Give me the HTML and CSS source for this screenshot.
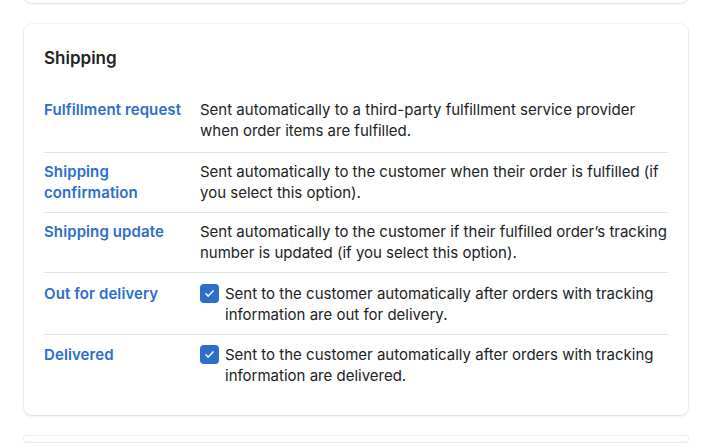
FILE: index.html
```html
<!DOCTYPE html>
<html lang="en">
<head>
<meta charset="utf-8">
<title>Shipping notifications</title>
<link rel="stylesheet" href="styles.css">
</head>
<body>
<div class="page">
  <div class="card card-prev"></div>
  <section class="card">
    <h2 class="card-title">Shipping</h2>
    <div class="rows">
      <div class="row">
        <a class="row-label" href="#">Fulfillment request</a>
        <div class="row-desc">Sent automatically to a third-party fulfillment service provider when order items are fulfilled.</div>
      </div>
      <div class="row">
        <a class="row-label" href="#">Shipping confirmation</a>
        <div class="row-desc">Sent automatically to the customer when their order is fulfilled (if you select this option).</div>
      </div>
      <div class="row">
        <a class="row-label" href="#">Shipping update</a>
        <div class="row-desc">Sent automatically to the customer if their fulfilled order’s tracking number is updated (if you select this option).</div>
      </div>
      <div class="row row-check">
        <a class="row-label" href="#">Out for delivery</a>
        <label class="row-desc check">
          <span class="checkbox"><svg viewBox="0 0 20 20" width="13" height="13"><path d="M4.5 10.5l3.5 3.5 7.5-8" fill="none" stroke="#fff" stroke-width="2.3" stroke-linecap="round" stroke-linejoin="round"/></svg></span>
          <span>Sent to the customer automatically after orders with tracking information are out for delivery.</span>
        </label>
      </div>
      <div class="row row-check">
        <a class="row-label" href="#">Delivered</a>
        <label class="row-desc check">
          <span class="checkbox"><svg viewBox="0 0 20 20" width="13" height="13"><path d="M4.5 10.5l3.5 3.5 7.5-8" fill="none" stroke="#fff" stroke-width="2.3" stroke-linecap="round" stroke-linejoin="round"/></svg></span>
          <span>Sent to the customer automatically after orders with tracking information are delivered.</span>
        </label>
      </div>
    </div>
  </section>
  <div class="card card-next"></div>
</div>
</body>
</html>
```

FILE: styles.css
```css
* { box-sizing: border-box; }
html, body { margin: 0; padding: 0; background: #ffffff; }
body {
  font-family: Inter, "Noto Sans", "Liberation Sans", sans-serif;
  color: #202223;
  font-size: 15px;
  line-height: 21px;
  overflow: hidden;
  height: 443px;
}
.page {
  padding: 0 32px 0 24px;
  display: flex;
  flex-direction: column;
  gap: 21px;
}
.card {
  background: #fff;
  border-radius: 8px;
  box-shadow: 0 0 0 1px rgba(63,63,68,0.05), 0 1px 3px 0 rgba(63,63,68,0.15);
  padding: 20px;
}
.card-prev { height: 40px; margin-top: -37px; }
.card-next { height: 6px; padding: 0; flex-shrink: 0; }
.card-title {
  margin: 0 0 19px;
  font-size: 17px;
  line-height: 28px;
  font-weight: 600;
}
.row {
  display: grid;
  grid-template-columns: 156px 1fr;
  padding: 8px 0 9px;
  border-top: 1px solid #e1e3e5;
}
.row:first-child { border-top: 0; padding-bottom: 11px; }
.row-check { padding-top: 10px; }
.row:last-child { padding-top: 9px; padding-bottom: 9px; }
.row-label {
  color: #2c6ecb;
  font-weight: 600;
  letter-spacing: 0.1px;
  text-decoration: none;
  padding-right: 12px;
}
.check { display: flex; gap: 6px; align-items: flex-start; }
.checkbox {
  flex: 0 0 19px;
  width: 19px;
  height: 19px;
  margin-top: 1px;
  border-radius: 4px;
  background: #2c6ecb;
  display: flex;
  align-items: center;
  justify-content: center;
}
```
